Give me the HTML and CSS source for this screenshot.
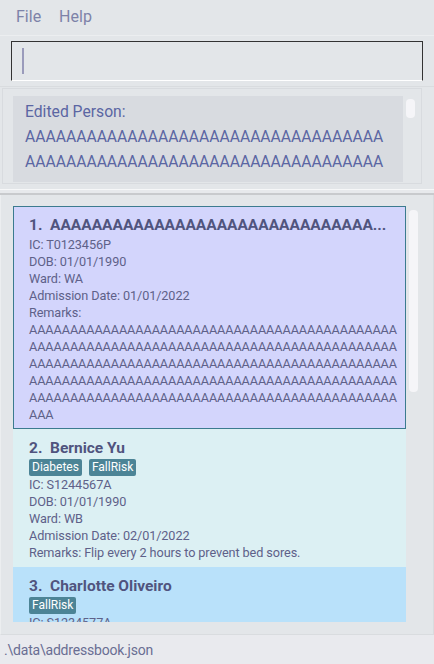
FILE: index.html
```html
<!DOCTYPE html>
<html>
<head>
<meta charset="utf-8">
<link rel="stylesheet" href="styles.css">
</head>
<body>
<div class="app">
  <div class="menubar"><span class="menu-item">File</span><span class="menu-item">Help</span></div>
  <div class="command-pane">
    <div class="command-box"><span class="caret"></span></div>
  </div>
  <div class="result-pane">
    <div class="result-outer">
      <div class="result-box">
        <div class="result-line">Edited Person:</div>
        <div class="result-line">AAAAAAAAAAAAAAAAAAAAAAAAAAAAAAAAAAA</div>
        <div class="result-line">AAAAAAAAAAAAAAAAAAAAAAAAAAAAAAAAAAA</div>
      </div>
      <div class="vscroll"><div class="thumb result-thumb"></div></div>
    </div>
  </div>
  <div class="divider"></div>
  <div class="list-pane">
    <div class="list-viewport">
      <div class="card selected">
        <div class="name"><span class="idx">1.</span><span class="nm">AAAAAAAAAAAAAAAAAAAAAAAAAAAAAAA...</span></div>
        <div class="line">IC: T0123456P</div>
        <div class="line">DOB: 01/01/1990</div>
        <div class="line">Ward: WA</div>
        <div class="line">Admission Date: 01/01/2022</div>
        <div class="line">Remarks:</div>
        <div class="line">AAAAAAAAAAAAAAAAAAAAAAAAAAAAAAAAAAAAAAAAAAAAA</div>
        <div class="line">AAAAAAAAAAAAAAAAAAAAAAAAAAAAAAAAAAAAAAAAAAAAA</div>
        <div class="line">AAAAAAAAAAAAAAAAAAAAAAAAAAAAAAAAAAAAAAAAAAAAA</div>
        <div class="line">AAAAAAAAAAAAAAAAAAAAAAAAAAAAAAAAAAAAAAAAAAAAA</div>
        <div class="line">AAAAAAAAAAAAAAAAAAAAAAAAAAAAAAAAAAAAAAAAAAAAA</div>
        <div class="line">AAA</div>
      </div>
      <div class="card even">
        <div class="name"><span class="idx">2.</span><span class="nm">Bernice Yu</span></div>
        <div class="tags"><span class="tag">Diabetes</span><span class="tag">FallRisk</span></div>
        <div class="line">IC: S1244567A</div>
        <div class="line">DOB: 01/01/1990</div>
        <div class="line">Ward: WB</div>
        <div class="line">Admission Date: 02/01/2022</div>
        <div class="line">Remarks: Flip every 2 hours to prevent bed sores.</div>
      </div>
      <div class="card odd">
        <div class="name"><span class="idx">3.</span><span class="nm">Charlotte Oliveiro</span></div>
        <div class="tags"><span class="tag">FallRisk</span></div>
        <div class="line">IC: S1234577A</div>
      </div>
    </div>
    <div class="vscroll"><div class="thumb list-thumb"></div></div>
  </div>
  <div class="status">.\data\addressbook.json</div>
</div>
</body>
</html>
```

FILE: styles.css
```css
* { box-sizing: border-box; }
html, body {
  margin: 0;
  padding: 0;
  background: #e3e6e9;
  font-family: Roboto, "Open Sans", sans-serif;
}
.app {
  width: 434px;
  height: 664px;
  display: flex;
  flex-direction: column;
  overflow: hidden;
}
.menubar {
  height: 35px;
  flex: none;
  display: flex;
  align-items: center;
  gap: 18px;
  padding: 0 0 2px 16px;
  font-size: 16px;
  color: #7d82a8;
}
.command-pane {
  height: 52px;
  flex: none;
  border-top: 1px solid #eceef0;
  border-bottom: 1px solid #d9dcdf;
  padding: 5px 11px 0 11px;
}
.command-box {
  height: 40px;
  border: 1px solid #333;
  border-bottom: 1px solid #ffffff;
  background: #e3e6e9;
  padding: 6px 0 0 10px;
}
.caret {
  display: block;
  width: 2px;
  height: 26px;
  background: #9a9bbb;
}
.result-pane {
  height: 101px;
  flex: none;
  padding: 1px 12px 0 2px;
}
.result-outer {
  height: 96px;
  border: 1px solid #d8dbdf;
  display: flex;
  padding: 7px 3px 1px 10px;
}
.result-box {
  flex: 1;
  background: #d8dbe0;
  padding: 3px 0 0 12px;
  overflow: hidden;
  font-size: 15.7px;
  line-height: 25px;
  color: #5b66a3;
  white-space: nowrap;
}
.vscroll {
  width: 15px;
  flex: none;
  padding-left: 3px;
}
.thumb {
  width: 9px;
  background: #f5f5f8;
  border-radius: 4px;
}
.result-thumb {
  margin-top: 3px;
  height: 19px;
}
.divider {
  height: 6px;
  flex: none;
  margin-top: 1px;
  border-top: 1px solid #f6f7f8;
  border-bottom: 2px solid #c8cacd;
  background: #e7e9ec;
}
.list-pane {
  height: 440px;
  flex: none;
  display: flex;
  padding: 11px 12px 12px 12px;
  border-right: 1px solid #d9dcdf;
  border-left: 1px solid #eceef0;
  border-bottom: 1px solid #d9dcdf;
}
.list-viewport {
  width: 395px;
  overflow: hidden;
}
.list-thumb {
  margin-top: 4px;
  height: 182px;
}
.card {
  padding: 8px 0 6px 16px;
  color: #5e6189;
  font-size: 12.7px;
  letter-spacing: -0.1px;
  line-height: 17px;
}
.card.selected {
  background: #d3d5fc;
  border: 1px solid #3b7b8f;
  padding: 7px 0 5px 15px;
}
.card.even { background: #dcf0f3; }
.card.odd { background: #b9e1fa; }
.name {
  display: flex;
  font-weight: bold;
  font-size: 15.5px;
  letter-spacing: 0;
  line-height: 22px;
  color: #50547e;
  white-space: nowrap;
}
.idx {
  flex: none;
  width: 21px;
}
.line { white-space: nowrap; }
.tags {
  display: flex;
  gap: 7px;
  height: 17px;
}
.tag {
  background: #4c8496;
  color: #ffffff;
  font-size: 12px;
  letter-spacing: 0;
  line-height: 17px;
  padding: 0 3px;
  border-radius: 2px;
}
.status {
  height: 29px;
  flex: none;
  background: #e9eaee;
  padding: 5px 0 0 4px;
  font-size: 14px;
  letter-spacing: -0.2px;
  line-height: 20px;
  color: #6a6e93;
}
```
